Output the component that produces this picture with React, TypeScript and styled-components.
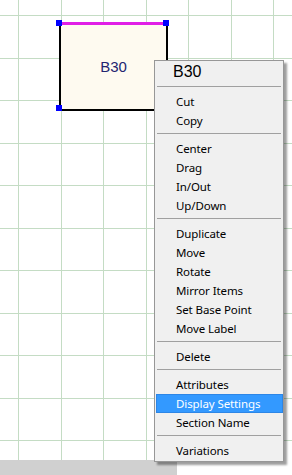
import React from 'react';
import styled, { createGlobalStyle } from 'styled-components';

const GlobalStyle = createGlobalStyle`
  html, body {
    margin: 0;
    padding: 0;
    background: #ffffff;
    overflow: hidden;
  }
  body {
    font-family: "Noto Sans", "Liberation Sans", sans-serif;
  }
`;

const Screen = styled.div`
  position: relative;
  width: 292px;
  height: 475px;
  display: flex;
  flex-direction: column;
  background: #ffffff;
  overflow: hidden;
`;

const Canvas = styled.div`
  position: relative;
  height: 460px;
  flex: none;
`;

const StatusStrip = styled.div`
  height: 15px;
  display: flex;
`;

const ScrollTrack = styled.div<{ $width: number }>`
  width: ${(p) => p.$width}px;
  background: #d0d0d0;
`;

const Block = styled.div`
  position: absolute;
  left: 59px;
  top: 22px;
  width: 105px;
  height: 84px;
  background: #fefaf0;
  border: 2px solid #000000;
  border-top: 3px solid #e01ee6;
  display: flex;
  align-items: center;
  justify-content: center;
`;

const BlockLabel = styled.span`
  font-family: "Liberation Sans", Arial, sans-serif;
  font-size: 15px;
  color: #232470;
  margin-top: -2px;
`;

const Handle = styled.div<{ $x: number; $y: number }>`
  position: absolute;
  left: ${(p) => p.$x - 3}px;
  top: ${(p) => p.$y - 3}px;
  width: 6px;
  height: 6px;
  background: #0000ff;
`;

const Menu = styled.div`
  position: absolute;
  z-index: 2;
  left: 154px;
  top: 60px;
  width: 128px;
  padding: 0 0 1px 0;
  background: #f0f0f0;
  border: 1px solid #979797;
  box-shadow: 3px 3px 2px rgba(0, 0, 0, 0.38);
  display: flex;
  flex-direction: column;
`;

const MenuTitle = styled.div`
  height: 22px;
  padding-left: 18px;
  display: flex;
  align-items: center;
  font-family: "Liberation Sans", Arial, sans-serif;
  font-size: 16px;
  color: #000000;
`;

const Separator = styled.div`
  height: 9px;
  display: flex;
  align-items: flex-start;
  padding: 3px 2px 0 2px;
  box-sizing: border-box;
  &::after {
    content: '';
    flex: 1;
    height: 1px;
    background: #a0a0a0;
  }
`;

const Item = styled.div<{ $active?: boolean }>`
  height: 19px;
  margin: 0 0 0 1px;
  padding: 0 0 1px 19px;
  display: flex;
  align-items: center;
  box-sizing: border-box;
  font-size: 11.5px;
  letter-spacing: -0.1px;
  color: ${(p) => (p.$active ? '#ffffff' : '#000000')};
  background: ${(p) => (p.$active ? '#3399ff' : 'transparent')};
  border: 1px solid ${(p) => (p.$active ? '#2d86e6' : 'transparent')};
`;

const gridX = [0, 1, 2, 3, 4, 5, 6].map((i) => 18 + Math.round(42.5 * i));
const gridY = [0, 1, 2, 3, 4, 5, 6, 7, 8, 9, 10].map((i) => 15 + Math.round(42.5 * i));

const Grid = () => (
  <svg width="292" height="460" style={{ position: 'absolute', left: 0, top: 0 }}>
    {gridX.map((x) => (
      <line key={`x${x}`} x1={x + 0.5} y1={0} x2={x + 0.5} y2={460} stroke="#c4dcc4" strokeWidth={1} />
    ))}
    {gridY.map((y) => (
      <line key={`y${y}`} x1={0} y1={y + 0.5} x2={292} y2={y + 0.5} stroke="#c4dcc4" strokeWidth={1} />
    ))}
  </svg>
);

type Entry = string | null;

const groups: Entry[] = [
  'Cut',
  'Copy',
  null,
  'Center',
  'Drag',
  'In/Out',
  'Up/Down',
  null,
  'Duplicate',
  'Move',
  'Rotate',
  'Mirror Items',
  'Set Base Point',
  'Move Label',
  null,
  'Delete',
  null,
  'Attributes',
  'Display Settings',
  'Section Name',
  null,
  'Variations',
];

const ContextMenu = ({ title, active }: { title: string; active: string }) => {
  return (
    <Menu>
      <MenuTitle>{title}</MenuTitle>
      <Separator />
      {groups.map((entry, i) =>
        entry === null ? (
          <Separator key={i} />
        ) : (
          <Item key={i} $active={entry === active}>
            {entry}
          </Item>
        )
      )}
    </Menu>
  );
};

export default function App() {
  return (
    <>
      <GlobalStyle />
      <Screen>
        <Canvas>
          <Grid />
          <Block>
            <BlockLabel>B30</BlockLabel>
          </Block>
          <Handle $x={59} $y={23} />
          <Handle $x={166} $y={23} />
          <Handle $x={59} $y={108} />
          <ContextMenu title="B30" active="Display Settings" />
        </Canvas>
        <StatusStrip>
          <ScrollTrack $width={177} />
        </StatusStrip>
      </Screen>
    </>
  );
}
